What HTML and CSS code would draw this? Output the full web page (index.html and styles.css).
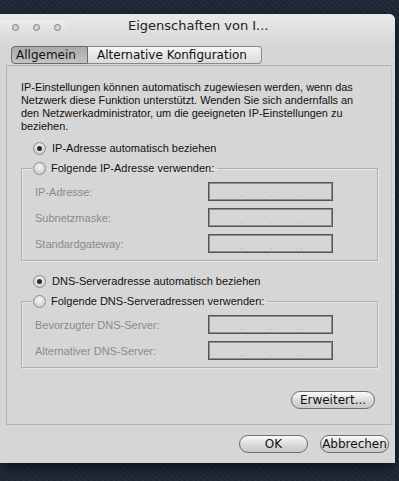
FILE: index.html
```html
<!DOCTYPE html>
<html lang="de">
<head>
    <meta charset="UTF-8">
    <title>Eigenschaften von I...</title>
    <link rel="stylesheet" href="styles.css">
</head>
<body>
    <div class="window">
        <div class="titlebar">
            <div class="lights">
                <span class="light"></span>
                <span class="light"></span>
                <span class="light"></span>
            </div>
            <div class="title">Eigenschaften von I...</div>
        </div>

        <div class="tabs">
            <div class="tab tab-active">Allgemein</div>
            <div class="tab">Alternative Konfiguration</div>
        </div>

        <div class="panel">
            <p class="intro">IP-Einstellungen können automatisch zugewiesen werden, wenn das Netzwerk diese Funktion unterstützt. Wenden Sie sich andernfalls an den Netzwerkadministrator, um die geeigneten IP-Einstellungen zu beziehen.</p>

            <div class="radio-row">
                <span class="radio checked"></span>
                <span>IP-Adresse automatisch beziehen</span>
            </div>

            <fieldset class="group">
                <legend class="radio-row">
                    <span class="radio"></span>
                    <span>Folgende IP-Adresse verwenden:</span>
                </legend>
                <div class="field">
                    <span class="field-label">IP-Adresse:</span>
                    <div class="ip-box"><span>.</span><span>.</span><span>.</span></div>
                </div>
                <div class="field">
                    <span class="field-label">Subnetzmaske:</span>
                    <div class="ip-box"><span>.</span><span>.</span><span>.</span></div>
                </div>
                <div class="field">
                    <span class="field-label">Standardgateway:</span>
                    <div class="ip-box"><span>.</span><span>.</span><span>.</span></div>
                </div>
            </fieldset>

            <div class="radio-row dns-auto">
                <span class="radio checked"></span>
                <span>DNS-Serveradresse automatisch beziehen</span>
            </div>

            <fieldset class="group">
                <legend class="radio-row">
                    <span class="radio"></span>
                    <span>Folgende DNS-Serveradressen verwenden:</span>
                </legend>
                <div class="field">
                    <span class="field-label">Bevorzugter DNS-Server:</span>
                    <div class="ip-box"><span>.</span><span>.</span><span>.</span></div>
                </div>
                <div class="field">
                    <span class="field-label">Alternativer DNS-Server:</span>
                    <div class="ip-box"><span>.</span><span>.</span><span>.</span></div>
                </div>
            </fieldset>

            <div class="advanced">
                <button class="pill-btn btn-advanced">Erweitert...</button>
            </div>
        </div>

        <div class="footer">
            <button class="pill-btn">OK</button>
            <button class="pill-btn">Abbrechen</button>
        </div>
    </div>
</body>
</html>
```

FILE: styles.css
```css
* {
    margin: 0;
    padding: 0;
    box-sizing: border-box;
}

body {
    width: 399px;
    height: 481px;
    overflow: hidden;
    background: #1d2633;
    background-image: repeating-linear-gradient(45deg, rgba(255,255,255,0.03) 0 2px, transparent 2px 4px);
    font-family: 'Liberation Sans', Arial, sans-serif;
    font-size: 11px;
    color: #111;
}

.window {
    margin-top: 14px;
    width: 395px;
    height: 449px;
    background: #d6d6d6;
    border-top-right-radius: 6px;
    box-shadow: 0 4px 14px rgba(0, 0, 0, 0.6);
    display: flex;
    flex-direction: column;
}

/* Title bar */
.titlebar {
    height: 31px;
    display: flex;
    align-items: center;
    background: linear-gradient(#e9e9e9, #d8d8d8);
    border-top-right-radius: 6px;
}

.lights {
    width: 67px;
    height: 14px;
    margin-top: -5px;
    display: flex;
    align-items: center;
    gap: 14px;
    padding-left: 12px;
    background: linear-gradient(#ececec, #dedede);
    border-radius: 0 7px 7px 0;
}

.light {
    width: 7px;
    height: 7px;
    border-radius: 50%;
    border: 1px solid #7e7e7e;
    background: #d2d2d2;
}

.title {
    margin-left: 61px;
    margin-top: -8px;
    font-family: 'DejaVu Sans', sans-serif;
    font-size: 13px;
    color: #222;
}

/* Tabs */
.tabs {
    display: flex;
    margin-left: 11px;
    margin-top: 1px;
    height: 18px;
}

.tab {
    padding: 0 9px;
    line-height: 16px;
    font-family: 'DejaVu Sans', sans-serif;
    font-size: 12px;
    color: #111;
    background: linear-gradient(#f4f4f4, #dadada);
    border: 1px solid #8a8a8a;
    border-left: none;
    border-radius: 0 4px 4px 0;
    width: 174px;
}

.tab-active {
    width: 77px;
    padding: 0 4px;
    background: linear-gradient(#a9a9a9, #c4c4c4);
    border-left: 1px solid #6a6a6a;
    border-color: #6a6a6a;
    border-radius: 4px 0 0 4px;
}

/* Panel */
.panel {
    margin: 1px 3px 0 6px;
    height: 360px;
    border: 1px solid #b4b4b4;
    border-right-color: #c4c4c4;
    padding: 15px 14px 0 14px;
    display: flex;
    flex-direction: column;
}

.intro {
    font-size: 10.9px;
    line-height: 13px;
    color: #111;
    margin-bottom: 7px;
    width: 341px;
}

.radio-row {
    height: 16px;
    display: flex;
    align-items: center;
    gap: 6px;
    padding-left: 12px;
    color: #111;
}

.radio {
    width: 13px;
    height: 13px;
    border-radius: 50%;
    border: 1px solid #8c8c8c;
    background: radial-gradient(circle at 50% 35%, #f6f6f6, #cfcfcf 75%);
    display: flex;
    align-items: center;
    justify-content: center;
}

.radio.checked::after {
    content: '';
    width: 5px;
    height: 5px;
    border-radius: 50%;
    background: #2a2a2a;
}

.group {
    margin-top: 4px;
    width: 357px;
    border: 1px solid #b0b0b0;
    box-shadow: inset 1px 1px 0 #e6e6e6, 1px 1px 0 #e6e6e6;
    padding: 6px 0 7px 0;
    display: flex;
    flex-direction: column;
    gap: 7px;
}

.group legend {
    margin-left: 10px;
    padding: 0 3px 0 1px;
    gap: 5px;
}

.field {
    height: 19px;
    display: flex;
    align-items: center;
    padding-left: 13px;
}

.field-label {
    width: 173px;
    color: #8a8a8a;
}

.ip-box {
    width: 125px;
    height: 19px;
    border: 1px solid #555;
    box-shadow: inset 0 0 0 1px #8d8d8d;
    display: flex;
    padding-left: 32px;
    gap: 27px;
    line-height: 22px;
    font-size: 9px;
    color: #9a9a9a;
}

.dns-auto {
    margin-top: 12px;
}

/* Buttons */
.advanced {
    margin-top: auto;
    margin-bottom: 15px;
    display: flex;
    justify-content: flex-end;
    padding-right: 2px;
}

.pill-btn {
    width: 69px;
    height: 18px;
    border: 1px solid #6e6e6e;
    border-radius: 9px;
    background: linear-gradient(#fbfbfb, #d9d9d9 55%, #c9c9c9);
    font-family: 'DejaVu Sans', sans-serif;
    font-size: 12px;
    color: #111;
    line-height: 16px;
}

.btn-advanced {
    width: 84px;
}

.footer {
    display: flex;
    justify-content: flex-end;
    gap: 12px;
    padding: 10px 6px 0 0;
}
```
